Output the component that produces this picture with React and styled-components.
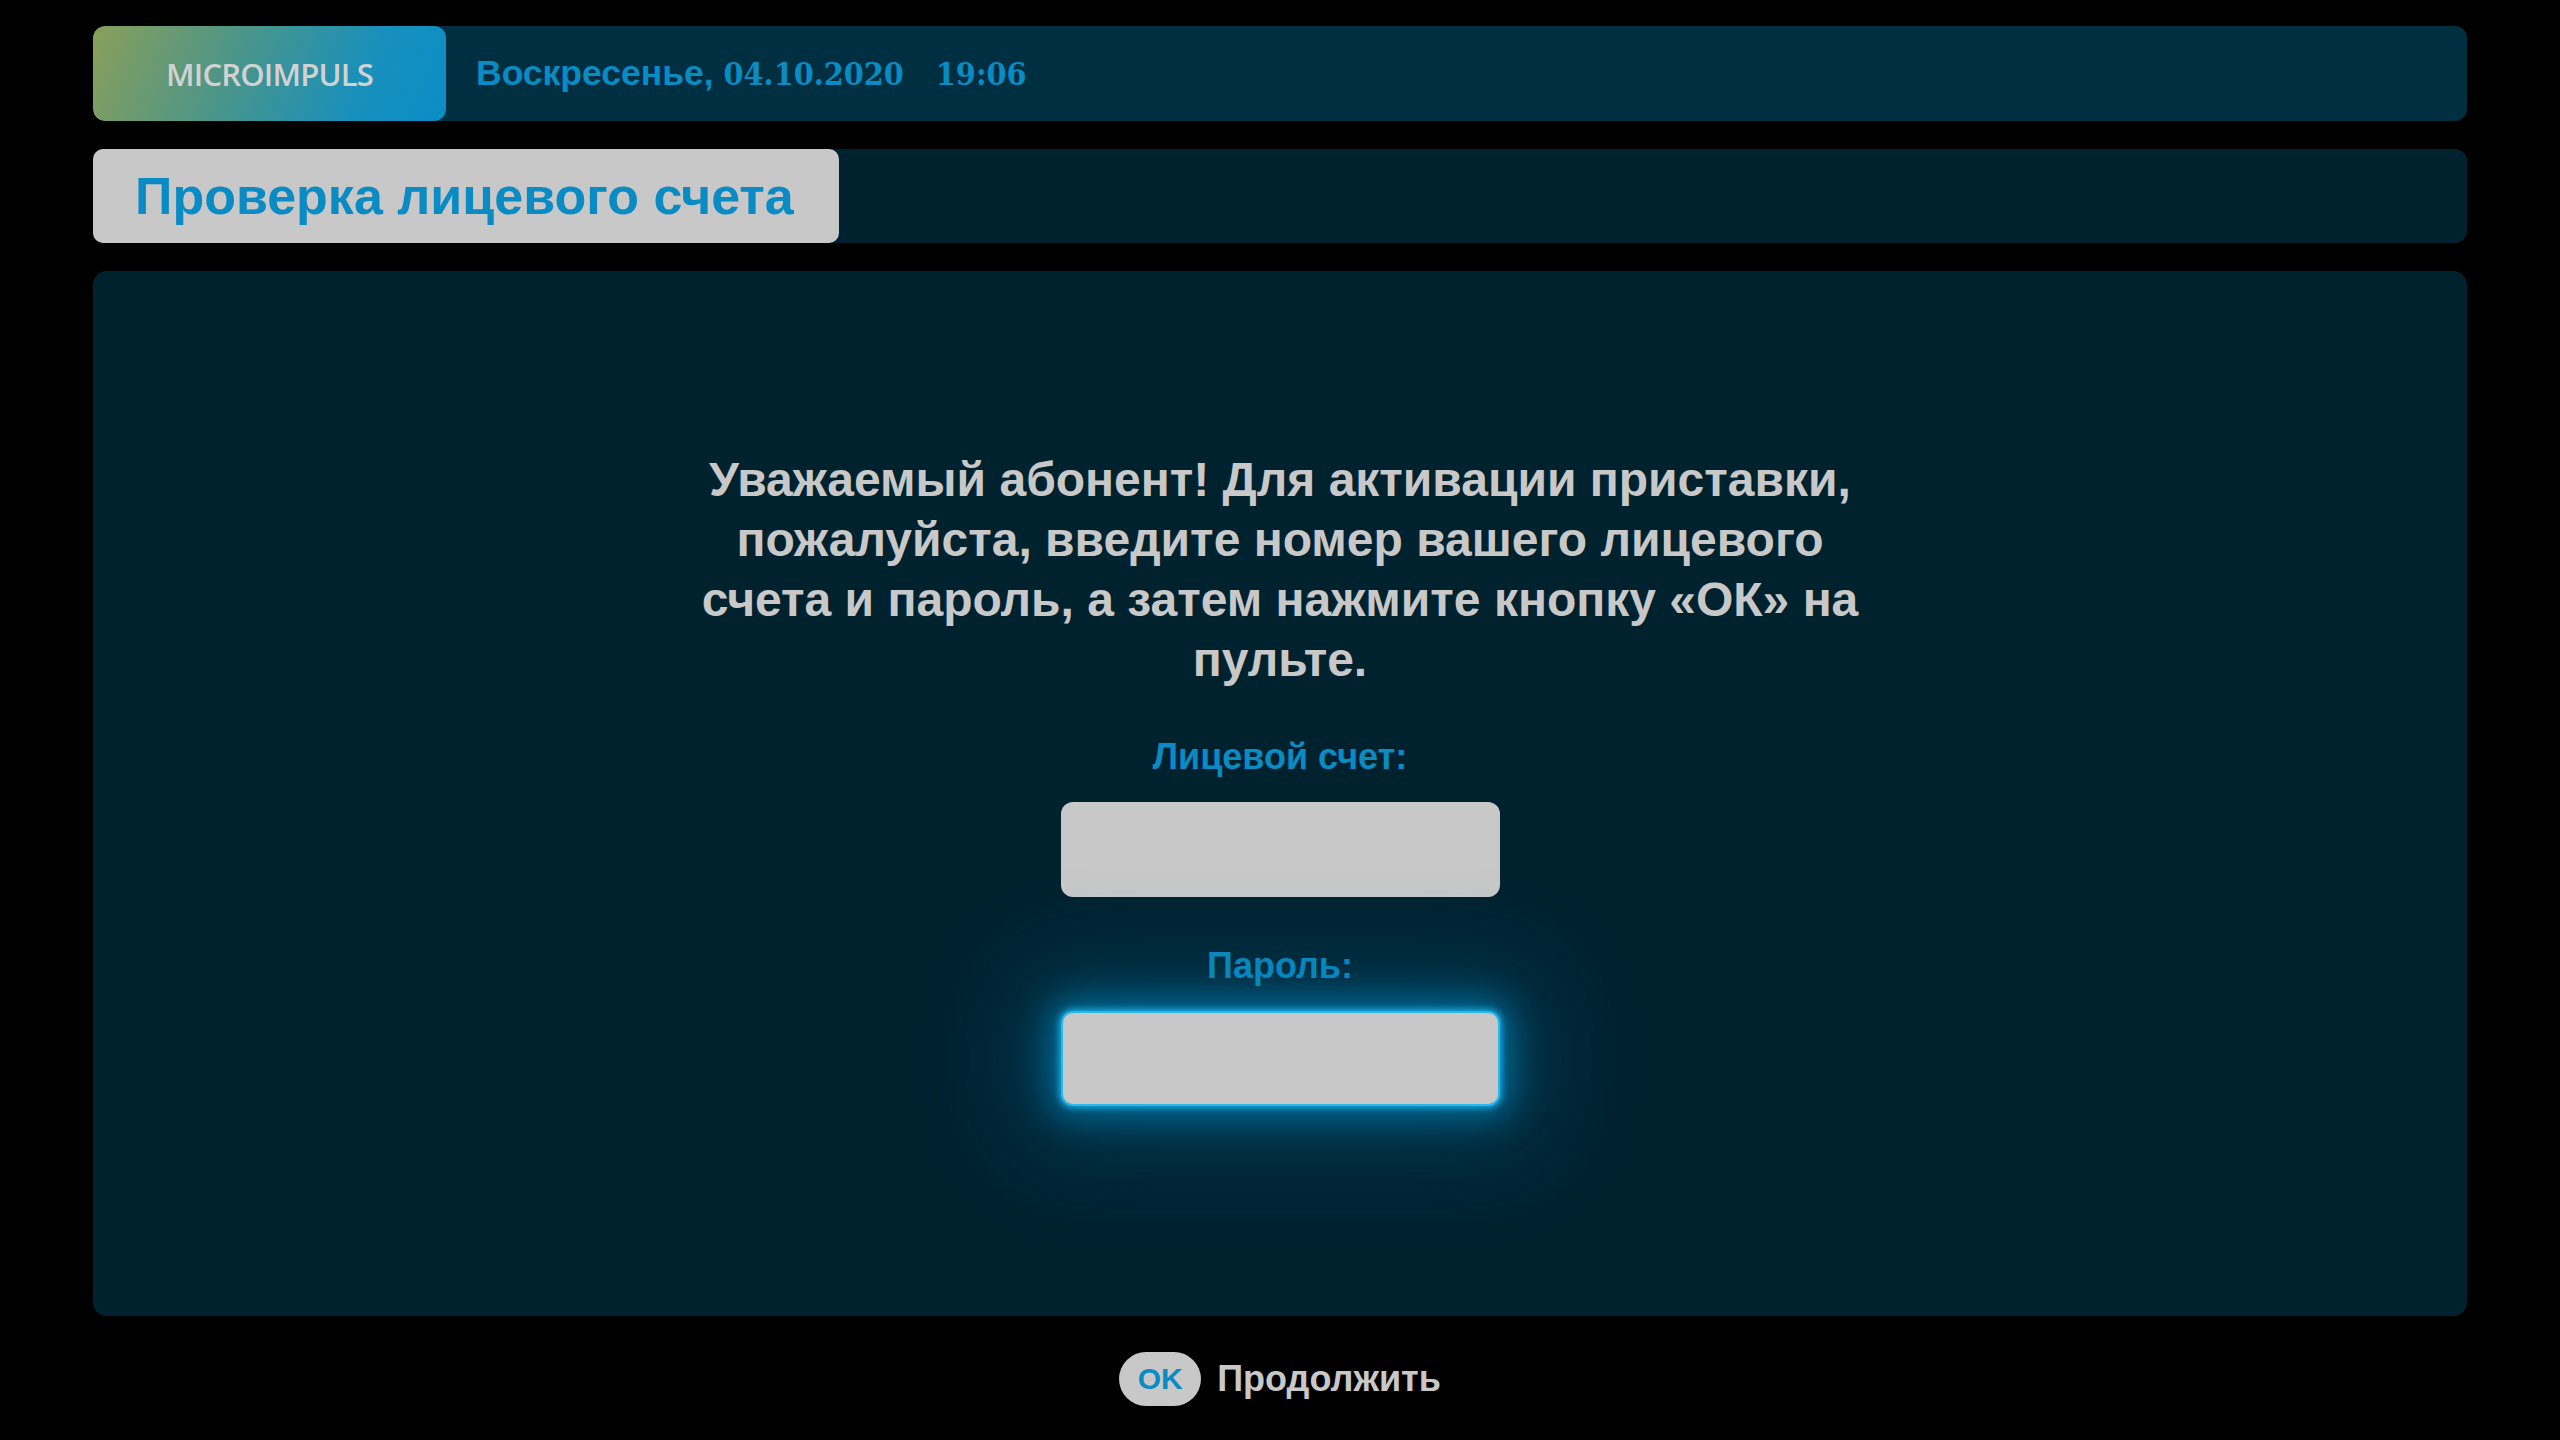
import React from "react";
import styled, { createGlobalStyle } from "styled-components";

const GlobalStyle = createGlobalStyle`
  html, body {
    margin: 0;
    padding: 0;
    background: #000;
  }
  body {
    font-family: "Liberation Sans", Arial, sans-serif;
  }
`;

const Screen = styled.div`
  width: 2560px;
  height: 1440px;
  box-sizing: border-box;
  padding: 26px 93px 0;
  display: flex;
  flex-direction: column;
  background: #000;
`;

const TopBar = styled.header`
  height: 95px;
  display: flex;
  align-items: center;
  background: #002f42;
  border-radius: 12px;
  overflow: hidden;
`;

const Logo = styled.div`
  width: 353px;
  height: 100%;
  display: flex;
  align-items: center;
  justify-content: center;
  border-radius: 12px;
  background: linear-gradient(112deg, #8a9f5a 0%, #4a958a 40%, #1890bc 75%, #0a8dc6 100%);
  font-family: "Open Sans", sans-serif;
  font-weight: 600;
  font-size: 31px;
  color: #d2d2d2;
  letter-spacing: -0.8px;
`;

const DateLine = styled.div`
  margin-left: 30px;
  display: flex;
  align-items: baseline;
  gap: 32px;
  color: #0a8bc3;
  font-weight: bold;
  font-size: 35.5px;
`;

const Digits = styled.span`
  font-family: "DejaVu Serif Condensed", "DejaVu Serif", serif;
  font-stretch: condensed;
  font-size: 32px;
`;

const TitleBar = styled.div`
  margin-top: 28px;
  height: 94px;
  display: flex;
  background: #00222f;
  border-radius: 12px;
`;

const TitleTab = styled.div`
  width: 746px;
  box-sizing: border-box;
  padding-left: 42px;
  display: flex;
  align-items: center;
  background: #c8c8c8;
  border-radius: 10px;
  color: #0a8bc3;
  font-weight: bold;
  font-size: 52px;
`;

const Panel = styled.main`
  margin-top: 28px;
  height: 1045px;
  box-sizing: border-box;
  padding-top: 179px;
  display: flex;
  flex-direction: column;
  align-items: center;
  background: #00222f;
  border-radius: 14px;
`;

const Message = styled.p`
  margin: 0;
  width: 1190px;
  text-align: center;
  color: #c8c8c8;
  font-weight: bold;
  font-size: 48px;
  line-height: 60px;
`;

const Label = styled.div`
  margin-top: ${p => p.$top}px;
  color: #0a8bc3;
  font-weight: bold;
  font-size: 36px;
  line-height: 40px;
`;

const Field = styled.div`
  margin-top: 25px;
  width: 439px;
  height: 95px;
  box-sizing: border-box;
  background: #c8c8c8;
  border-radius: 12px;
  ${p =>
    p.$focused &&
    `
    border: 2px solid #2ab8ea;
    box-shadow: 0 0 6px 2px #18a8e0, 0 0 34px 12px rgba(0, 150, 210, 0.55),
      0 0 100px 40px rgba(0, 115, 170, 0.32);
  `}
`;

const Footer = styled.footer`
  margin-top: 36px;
  display: flex;
  align-items: center;
  justify-content: center;
  gap: 16px;
`;

const KeyPill = styled.span`
  width: 82px;
  height: 54px;
  display: flex;
  align-items: center;
  justify-content: center;
  border-radius: 27px;
  background: #c8c8c8;
  color: #0a8bc3;
  font-weight: bold;
  font-size: 30px;
`;

const FooterText = styled.span`
  color: #c8c8c8;
  font-weight: bold;
  font-size: 36px;
`;

const App = () => {
  return (
    <>
      <GlobalStyle />
      <Screen>
        <TopBar>
          <Logo>MICROIMPULS</Logo>
          <DateLine>
            <span>
              Воскресенье, <Digits>04.10.2020</Digits>
            </span>
            <Digits>19:06</Digits>
          </DateLine>
        </TopBar>

        <TitleBar>
          <TitleTab>Проверка лицевого счета</TitleTab>
        </TitleBar>

        <Panel>
          <Message>
            Уважаемый абонент! Для активации приставки, пожалуйста, введите
            номер вашего лицевого счета и пароль, а затем нажмите кнопку «ОК» на
            пульте.
          </Message>
          <Label $top={47}>Лицевой счет:</Label>
          <Field />
          <Label $top={49}>Пароль:</Label>
          <Field $focused />
        </Panel>

        <Footer>
          <KeyPill>OK</KeyPill>
          <FooterText>Продолжить</FooterText>
        </Footer>
      </Screen>
    </>
  );
};

export default App;
